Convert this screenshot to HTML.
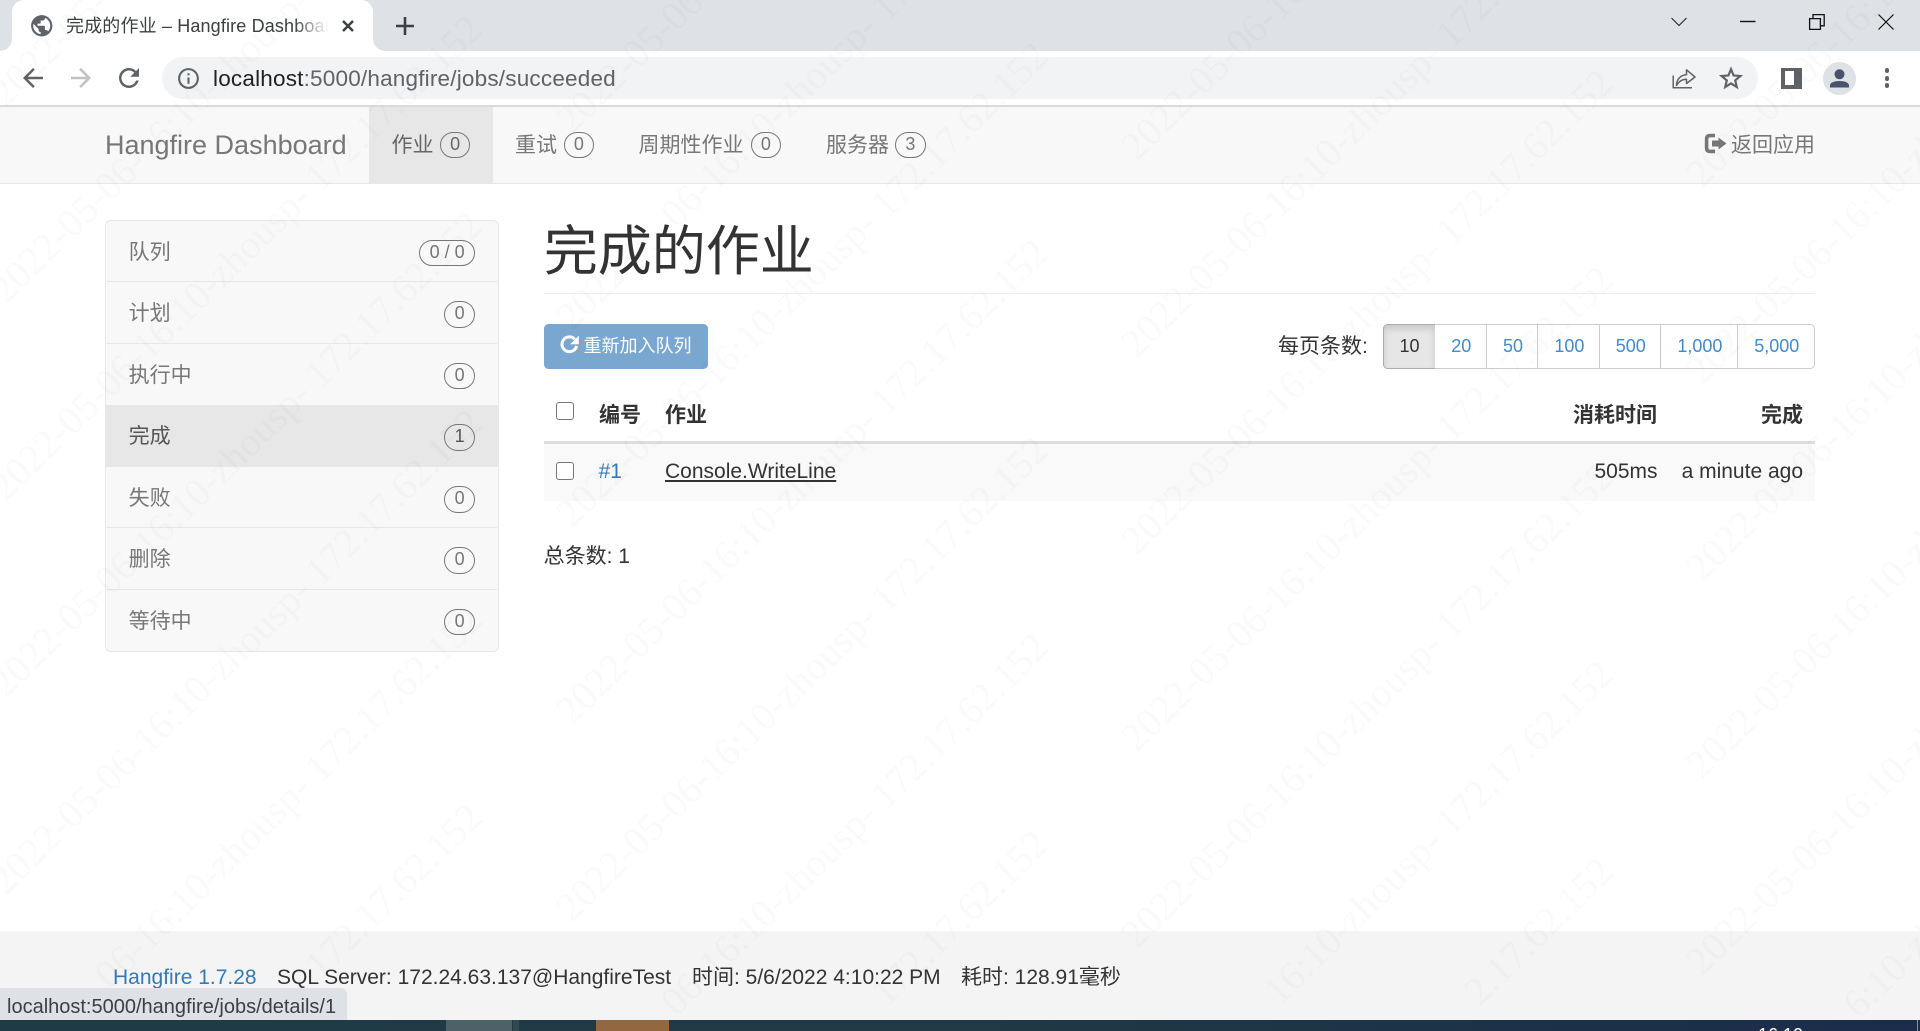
<!DOCTYPE html>
<html lang="zh-CN">
<head>
<meta charset="utf-8">
<title>完成的作业 – Hangfire Dashboard</title>
<style>
*{margin:0;padding:0;box-sizing:border-box}
html,body{width:1920px;height:1031px;overflow:hidden;background:#fff}
body{position:relative;font-family:"Liberation Sans","Noto Sans CJK SC",sans-serif;font-size:21px;color:#333}
.a{position:absolute}
.t{position:absolute;white-space:nowrap;line-height:30px;height:30px}
.r{text-align:right}
a{color:#337ab7;text-decoration:none}
.badge{position:absolute;height:26.7px;width:30.7px;border:1.5px solid #777;border-radius:14px;font-size:18px;line-height:23.7px;text-align:center;color:#777}
.nav{color:#777}
.side{color:#777}
.pg{position:absolute;top:324px;height:44.7px;border:1.5px solid #ccc;padding:1px 0 0 2px;font-size:18px;line-height:40.5px;text-align:center;color:#428bca;background:#fff}
input[type=checkbox]{position:absolute;appearance:none;-webkit-appearance:none;width:18px;height:18px;border:1.5px solid #767676;border-radius:3px;background:#fff}
svg{position:absolute;display:block}
</style>
</head>
<body>

<!-- tab strip -->
<div class="a" style="left:0;top:0;width:1920px;height:51px;background:#dee1e6"></div>
<div class="a" style="left:12px;top:0;width:361px;height:51px;background:#fff;border-radius:12px 12px 0 0"></div>
<div class="a" style="left:0;top:39px;width:12px;height:12px;background:radial-gradient(circle at 0 0,#dee1e6 11.5px,#fff 12.2px)"></div>
<div class="a" style="left:373px;top:39px;width:12px;height:12px;background:radial-gradient(circle at 100% 0,#dee1e6 11.5px,#fff 12.2px)"></div>
<svg style="left:29px;top:13px" width="25.5" height="25.5" viewBox="0 0 24 24"><path fill="#5f6368" d="M12 2C6.48 2 2 6.48 2 12s4.48 10 10 10 10-4.48 10-10S17.52 2 12 2zm-1 17.93c-3.95-.49-7-3.85-7-7.93 0-.62.08-1.21.21-1.79L9 15v1c0 1.1.9 2 2 2v1.93zm6.9-2.54c-.26-.81-1-1.39-1.9-1.39h-1v-3c0-.55-.45-1-1-1H8v-2h2c.55 0 1-.45 1-1V7h2c1.1 0 2-.9 2-2v-.41c2.93 1.19 5 4.06 5 7.41 0 2.08-.8 3.97-2.1 5.39z"/></svg>
<div class="t" style="left:66px;top:11px;width:264px;overflow:hidden;font-size:18px;letter-spacing:.15px;color:#3c4043;-webkit-mask-image:linear-gradient(90deg,#000 228px,transparent 262px);mask-image:linear-gradient(90deg,#000 228px,transparent 262px)">完成的作业 – Hangfire Dashboard</div>
<svg style="left:341px;top:19px" width="14" height="14" viewBox="0 0 14 14"><path d="M2 2L12 12M12 2L2 12" stroke="#3c4043" stroke-width="2.5" fill="none"/></svg>
<svg style="left:396px;top:17px" width="18" height="18" viewBox="0 0 18 18"><path d="M9 0V18M0 9H18" stroke="#3c4043" stroke-width="2.6" fill="none"/></svg>
<!-- window controls -->
<svg style="left:1670px;top:16px" width="18" height="12" viewBox="0 0 18 12"><path d="M1.5 2L9 9.5L16.5 2" stroke="#222" stroke-width="1.1" fill="none"/></svg>
<svg style="left:1739px;top:19px" width="18" height="5" viewBox="0 0 18 5"><path d="M1 2.5H16.5" stroke="#111" stroke-width="1.4" fill="none"/></svg>
<svg style="left:1808px;top:13px" width="18" height="18" viewBox="0 0 18 18"><path d="M1.6 5.6H12.4V16.4H1.6ZM5 5.2V1.6H16.2V12.8H12.6" stroke="#111" stroke-width="1.3" fill="none"/></svg>
<svg style="left:1877px;top:13px" width="18" height="18" viewBox="0 0 18 18"><path d="M1.5 1.5L16.5 16.5M16.5 1.5L1.5 16.5" stroke="#111" stroke-width="1.2" fill="none"/></svg>

<!-- toolbar -->
<div class="a" style="left:0;top:51px;width:1920px;height:54.5px;background:#fff"></div>
<div class="a" style="left:0;top:105px;width:1920px;height:2px;background:#dadada"></div>
<svg style="left:18px;top:63px" width="30" height="30" viewBox="0 0 24 24"><path fill="#5f6368" d="M20 11H7.83l5.59-5.59L12 4l-8 8 8 8 1.41-1.41L7.83 13H20v-2z"/></svg>
<svg style="left:66px;top:63px" width="30" height="30" viewBox="0 0 24 24"><path fill="#bdc1c6" d="M12 4l-1.41 1.41L16.17 11H4v2h12.17l-5.58 5.59L12 20l8-8z"/></svg>
<svg style="left:114px;top:62.5px" width="30" height="30" viewBox="0 0 24 24"><path fill="#5f6368" d="M17.65 6.35C16.2 4.9 14.21 4 12 4c-4.42 0-7.99 3.58-7.99 8s3.57 8 7.99 8c3.73 0 6.84-2.55 7.73-6h-2.08c-.82 2.33-3.04 4-5.65 4-3.31 0-6-2.69-6-6s2.69-6 6-6c1.66 0 3.14.69 4.22 1.78L13 11h7V4l-2.35 2.35z"/></svg>
<div class="a" style="left:162px;top:57px;width:1595.5px;height:42px;border-radius:21px;background:#f1f3f4"></div>
<svg style="left:175.5px;top:65.5px" width="25" height="25" viewBox="0 0 24 24"><path fill="#5f6368" d="M11 7h2v2h-2zm0 4h2v6h-2zm1-9C6.48 2 2 6.48 2 12s4.48 10 10 10 10-4.48 10-10S17.52 2 12 2zm0 18c-4.41 0-8-3.59-8-8s3.59-8 8-8 8 3.59 8 8-3.59 8-8 8z"/></svg>
<div class="t" style="left:213px;top:64px;font-size:22.5px;letter-spacing:.2px;color:#5f6368"><span style="color:#202124">localhost</span>:5000/hangfire/jobs/succeeded</div>
<svg style="left:1672px;top:67px" width="24" height="22" viewBox="0 0 24 22"><path d="M1.2 8.5V20.8H20" stroke="#5f6368" stroke-width="1.5" fill="none"/><path d="M4.5 18.5C4.5 11.5 9.5 8 14.5 7.8V2.8L23 10L14.5 16.5V12.2C10.5 12.2 7 14 4.5 18.5Z" stroke="#5f6368" stroke-width="1.5" fill="none" stroke-linejoin="round"/></svg>
<svg style="left:1719px;top:66px" width="24" height="24" viewBox="0 0 24 24"><path d="M12 3.2L14.6 9.5L21.4 10L16.2 14.4L17.8 21L12 17.4L6.2 21L7.8 14.4L2.6 10L9.4 9.5Z" stroke="#5f6368" stroke-width="2.2" fill="none" stroke-linejoin="miter"/></svg>
<div class="a" style="left:1781px;top:68px;width:21px;height:20.5px;background:#5f6368"></div>
<div class="a" style="left:1785px;top:70.7px;width:9.3px;height:14.7px;background:#fff"></div>
<div class="a" style="left:1823.3px;top:61.7px;width:33px;height:33px;border-radius:50%;background:#dee1e6"></div>
<svg style="left:1823.3px;top:61.7px" width="33" height="33" viewBox="0 0 33 33"><circle cx="16.5" cy="12.3" r="5" fill="#46536b"/><path d="M7 25.5V23.5C7 20.5 11.5 19 16.5 19S26 20.5 26 23.5V25.5Z" fill="#46536b"/></svg>
<div class="a" style="left:1884.6px;top:68.4px;width:4.8px;height:4.8px;border-radius:50%;background:#5f6368"></div>
<div class="a" style="left:1884.6px;top:75.9px;width:4.8px;height:4.8px;border-radius:50%;background:#5f6368"></div>
<div class="a" style="left:1884.6px;top:83px;width:4.8px;height:4.8px;border-radius:50%;background:#5f6368"></div>

<!-- navbar -->
<div class="a" style="left:0;top:107px;width:1920px;height:77px;background:#f8f8f8;border-bottom:1.5px solid #e7e7e7"></div>
<div class="a" style="left:369px;top:107px;width:124px;height:75.5px;background:#e7e7e7"></div>
<div class="t" style="left:105px;top:130px;font-size:27px;color:#777">Hangfire Dashboard</div>
<div class="t nav" style="left:391.5px;top:131.4px;color:#666">作业</div><div class="badge" style="left:439.8px;top:131.7px;color:#666;border-color:#777">0</div>
<div class="t nav" style="left:515px;top:131.4px">重试</div><div class="badge" style="left:563.5px;top:131.7px">0</div>
<div class="t nav" style="left:638.5px;top:131.4px">周期性作业</div><div class="badge" style="left:750.5px;top:131.7px">0</div>
<div class="t nav" style="left:826px;top:131.4px">服务器</div><div class="badge" style="left:895px;top:131.7px">3</div>
<svg style="left:1704px;top:133px" width="24" height="21" viewBox="0 0 24 21"><path d="M11 2.6H6Q2.6 2.6 2.6 6V15Q2.6 18.4 6 18.4H11" stroke="#777" stroke-width="3.6" fill="none"/><path d="M8 7.5H14.5V4.5L22.5 10.5L14.5 16.5V13.5H8Z" fill="#777"/></svg>
<div class="t nav" style="left:1731px;top:131.4px">返回应用</div>

<!-- sidebar -->
<div class="a side" style="left:105.3px;top:220px;width:393.4px;height:431.8px;background:#f8f8f8;border:1.5px solid #e7e7e7;border-radius:6px;overflow:hidden"></div>
<div class="a" style="left:106px;top:404.5px;width:392px;height:62.2px;background:#e7e7e7"></div>
<div class="a" style="left:106.8px;top:280.6px;width:390.4px;height:1.5px;background:#e7e7e7"></div>
<div class="a" style="left:106.8px;top:342.6px;width:390.4px;height:1.5px;background:#e7e7e7"></div>
<div class="a" style="left:106.8px;top:526.6px;width:390.4px;height:1.5px;background:#e7e7e7"></div>
<div class="a" style="left:106.8px;top:588.6px;width:390.4px;height:1.5px;background:#e7e7e7"></div>
<div class="t side" style="left:128.6px;top:238px">队列</div><div class="badge" style="left:419.3px;top:239.7px;width:55.7px">0 / 0</div>
<div class="t side" style="left:128.6px;top:299px">计划</div><div class="badge" style="left:444.3px;top:301px">0</div>
<div class="t side" style="left:128.6px;top:360.7px">执行中</div><div class="badge" style="left:444.3px;top:362.7px">0</div>
<div class="t side" style="left:128.6px;top:422.4px;color:#555">完成</div><div class="badge" style="left:444.3px;top:424px;color:#555;border-color:#777">1</div>
<div class="t side" style="left:128.6px;top:484px">失败</div><div class="badge" style="left:444.3px;top:486px">0</div>
<div class="t side" style="left:128.6px;top:545.4px">删除</div><div class="badge" style="left:444.3px;top:547px">0</div>
<div class="t side" style="left:128.6px;top:606.7px">等待中</div><div class="badge" style="left:444.3px;top:608.5px">0</div>

<!-- main -->
<h1 class="a" style="left:543.75px;top:216.5px;font-size:54px;font-weight:400;line-height:70px;white-space:nowrap;color:#333">完成的作业</h1>
<div class="a" style="left:544px;top:292.5px;width:1271px;height:1.5px;background:#eee"></div>

<div class="a" style="left:544px;top:324px;width:164px;height:44.7px;border-radius:4.5px;background:#7aa7d0"></div>
<svg style="left:559px;top:334px" width="21" height="21" viewBox="0 0 21 21"><path d="M15.8 5.2A7.4 7.4 0 1 0 17.6 12" stroke="#fff" stroke-width="3" fill="none"/><path d="M19.8 1.6V10.2H11.2Z" fill="#fff"/></svg>
<div class="t" style="left:583.5px;top:331px;font-size:18px;color:#fff">重新加入队列</div>

<div class="t" style="left:1278px;top:332.2px">每页条数:</div>
<div class="pg" style="left:1383px;width:53px;padding-left:0;border-radius:4.5px 0 0 4.5px;background:#e6e6e6;border-color:#adadad;color:#333;box-shadow:inset 0 4px 7px rgba(0,0,0,.125)">10</div>
<div class="pg" style="left:1434.8px;width:52px;border-left:0">20</div>
<div class="pg" style="left:1486px;width:52px">50</div>
<div class="pg" style="left:1537px;width:62.8px">100</div>
<div class="pg" style="left:1598.7px;width:62.2px">500</div>
<div class="pg" style="left:1659.8px;width:78.2px">1,000</div>
<div class="pg" style="left:1737px;width:77.5px;border-radius:0 4.5px 4.5px 0">5,000</div>

<input type="checkbox" style="left:556px;top:402px">
<div class="t" style="left:599px;top:401.4px;font-weight:bold">编号</div>
<div class="t" style="left:665px;top:401.4px;font-weight:bold">作业</div>
<div class="t r" style="right:263px;top:401.4px;font-weight:bold">消耗时间</div>
<div class="t r" style="right:117px;top:401.4px;font-weight:bold">完成</div>
<div class="a" style="left:544px;top:441px;width:1271px;height:3px;background:#ddd"></div>
<div class="a" style="left:544px;top:444px;width:1271px;height:56.7px;background:#f9f9f9"></div>
<input type="checkbox" style="left:556px;top:462px">
<div class="t" style="left:598.6px;top:457.2px"><a href="#">#1</a></div>
<div class="t" style="left:665px;top:457.2px"><a href="#" style="color:#333;text-decoration:underline">Console.WriteLine</a></div>
<div class="t r" style="right:262.5px;top:457.2px">505ms</div>
<div class="t r" style="right:117px;top:457.2px">a minute ago</div>

<div class="t" style="left:543.6px;top:542.4px">总条数: 1</div>

<!-- footer -->
<div class="a" style="left:0;top:931px;width:1920px;height:89px;background:#f4f4f4"></div>
<div class="t" style="left:113px;top:963.2px"><a href="#">Hangfire 1.7.28</a></div>
<div class="t" style="left:277px;top:963.2px">SQL Server: 172.24.63.137@HangfireTest</div>
<div class="t" style="left:692px;top:963.2px">时间: 5/6/2022 4:10:22 PM</div>
<div class="t" style="left:961px;top:963.2px">耗时: 128.91毫秒</div>

<!-- status bubble -->
<div class="a" style="left:0;top:987.5px;width:347px;height:32.5px;background:#dee1e6;border-radius:0 6px 0 0"></div>
<div class="t" style="left:7px;top:991.5px;font-size:20px;color:#3c4043">localhost:5000/hangfire/jobs/details/1</div>

<!-- taskbar sliver -->
<div class="a" style="left:0;top:1020px;width:1920px;height:11px;background:linear-gradient(90deg,#1f3b45 0%,#1f3a44 50%,#1b2c4a 100%);overflow:hidden">
  <div class="a" style="left:446px;top:0;width:66px;height:11px;background:#4f6168"></div>
  <div class="a" style="left:513px;top:0;width:6px;height:11px;background:#33474f"></div>
  <div class="a" style="left:596px;top:0;width:73px;height:11px;background:#93673f"></div>
  <div class="a" style="left:1758px;top:4.7px;width:60px;height:6.3px;overflow:hidden;font-size:18px;line-height:20px;color:#fff;white-space:nowrap">16:10</div>
  <div class="a" style="left:1917px;top:0;width:1px;height:11px;background:#8a93a3"></div>
</div>

<!-- watermark -->
<svg style="left:0;top:0;pointer-events:none" width="1920" height="1031" viewBox="0 0 1920 1031">
<g font-family="'Liberation Serif',serif" font-size="40" fill="#000" fill-opacity="0.02">
<text transform="translate(6 108) rotate(-44.5)">2022-05-06-16:10-zhousp- 172.17.62.152</text>
<text transform="translate(6 305) rotate(-44.5)">2022-05-06-16:10-zhousp- 172.17.62.152</text>
<text transform="translate(6 502) rotate(-44.5)">2022-05-06-16:10-zhousp- 172.17.62.152</text>
<text transform="translate(6 699) rotate(-44.5)">2022-05-06-16:10-zhousp- 172.17.62.152</text>
<text transform="translate(6 896) rotate(-44.5)">2022-05-06-16:10-zhousp- 172.17.62.152</text>
<text transform="translate(110.6 990.2) rotate(-44.5)">06-16:10-zhousp- 172.17.62.152</text>
<text transform="translate(320.6 980.9) rotate(-44.5)">172.17.62.152</text>
<text transform="translate(572 135) rotate(-44.5)">2022-05-06-16:10-zhousp- 172.17.62.152</text>
<text transform="translate(572 332) rotate(-44.5)">2022-05-06-16:10-zhousp- 172.17.62.152</text>
<text transform="translate(572 529) rotate(-44.5)">2022-05-06-16:10-zhousp- 172.17.62.152</text>
<text transform="translate(572 726) rotate(-44.5)">2022-05-06-16:10-zhousp- 172.17.62.152</text>
<text transform="translate(572 923) rotate(-44.5)">2022-05-06-16:10-zhousp- 172.17.62.152</text>
<text transform="translate(676.6 1017.2) rotate(-44.5)">06-16:10-zhousp- 172.17.62.152</text>
<text transform="translate(886.6 1007.9) rotate(-44.5)">172.17.62.152</text>
<text transform="translate(1137 162) rotate(-44.5)">2022-05-06-16:10-zhousp- 172.17.62.152</text>
<text transform="translate(1137 359) rotate(-44.5)">2022-05-06-16:10-zhousp- 172.17.62.152</text>
<text transform="translate(1137 556) rotate(-44.5)">2022-05-06-16:10-zhousp- 172.17.62.152</text>
<text transform="translate(1137 753) rotate(-44.5)">2022-05-06-16:10-zhousp- 172.17.62.152</text>
<text transform="translate(1137 950) rotate(-44.5)">2022-05-06-16:10-zhousp- 172.17.62.152</text>
<text transform="translate(1279.6 1006.9) rotate(-44.5)">16:10-zhousp- 172.17.62.152</text>
<text transform="translate(1480 1007) rotate(-44.5)">2.17.62.152</text>
<text transform="translate(1702 189) rotate(-44.5)">2022-05-06-16:10-zhousp- 172.17.62.152</text>
<text transform="translate(1702 386) rotate(-44.5)">2022-05-06-16:10-zhousp- 172.17.62.152</text>
<text transform="translate(1702 583) rotate(-44.5)">2022-05-06-16:10-zhousp- 172.17.62.152</text>
<text transform="translate(1702 780) rotate(-44.5)">2022-05-06-16:10-zhousp- 172.17.62.152</text>
<text transform="translate(1702 977) rotate(-44.5)">2022-05-06-16:10-zhousp- 172.17.62.152</text>
<text transform="translate(1858.9 1019.8) rotate(-44.5)">6:10-zhousp- 172.17.62.152</text>
</g>
</svg>
</body>
</html>
